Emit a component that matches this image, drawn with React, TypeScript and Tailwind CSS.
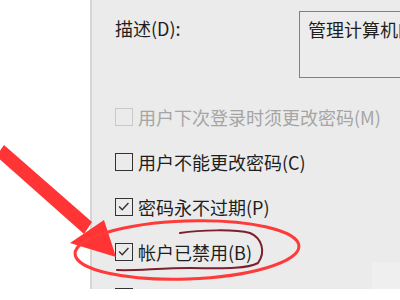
import React from 'react';

const font = { fontFamily: '"Noto Sans CJK SC", "Noto Sans", sans-serif' };

type Row = { label: string; checked?: boolean; disabled?: boolean };

const rows: Row[] = [
  { label: '用户下次登录时须更改密码(M)', disabled: true },
  { label: '用户不能更改密码(C)' },
  { label: '密码永不过期(P)', checked: true },
  { label: '帐户已禁用(B)', checked: true },
  { label: '帐户已锁定(L)' },
];

const CheckBox = ({ checked, disabled }: { checked?: boolean; disabled?: boolean }) => (
  <span
    className={`flex h-[18px] w-[18px] flex-shrink-0 items-center justify-center border-[1.5px] ${
      disabled ? 'border-[#c9c9c9]' : 'border-[#333333]'
    }`}
  >
    {checked && (
      <svg viewBox="0 0 18 18" className="h-[18px] w-[18px]">
        <polyline points="3.5,8.5 7,12 14,4.5" fill="none" stroke="#333" strokeWidth="1.6" />
      </svg>
    )}
  </span>
);

export default function App() {
  return (
    <div className="relative h-[300px] w-[400px] overflow-hidden bg-white" style={font}>
      <div className="flex h-[289px]">
        <div className="w-[90px] bg-white" />
        <div className="flex-1 overflow-hidden border-l-2 border-[#d5d5d5] bg-[#ebebeb] pl-[23px]">
          {/* description */}
          <div className="flex h-[94px] items-start">
            <span className="mt-[16px] w-[184px] flex-shrink-0 text-[18px] leading-[24px] text-[#1e1e1e]">
              描述(D):
            </span>
            <div className="mt-[11px] h-[67px] w-[140px] flex-shrink-0 border border-[#808080] bg-[#ececec] pl-[8px] pt-[5px]">
              <span className="whitespace-nowrap text-[18px] leading-[24px] text-[#1e1e1e]">管理计算机的</span>
            </div>
          </div>

          {/* options */}
          {rows.map((r) => (
            <div key={r.label} className="flex h-[45px] items-center gap-[5px]">
              <CheckBox checked={r.checked} disabled={r.disabled} />
              <span
                className={`whitespace-nowrap text-[18px] leading-[24px] ${
                  r.disabled ? 'text-[#a5a5a5]' : 'text-[#1e1e1e]'
                }`}
              >
                {r.label}
              </span>
            </div>
          ))}
        </div>
      </div>
      <div className="absolute right-0 top-[262px] h-[27px] w-[28px] bg-[#efefef]" />

      {/* annotations */}
      <svg className="absolute left-0 top-0" width="400" height="300" viewBox="0 0 400 300">
        <polygon points="-4,156 4,145 92,222 84,234" fill="#ff3434" />
        <polygon points="70,243 104,220 116,257" fill="#ff3434" />
        <ellipse
          cx="187"
          cy="250"
          rx="112"
          ry="29"
          transform="rotate(-2 187 250)"
          fill="none"
          stroke="#ff3a3a"
          strokeWidth="3"
        />
        <path
          d="M180,233 C200,230 235,229 250,233 C262,238 266,252 258,263 C245,270 215,268 190,268 C160,268 135,271 117,270"
          fill="none"
          stroke="#7d1f2c"
          strokeWidth="2"
          strokeLinecap="round"
        />
      </svg>
    </div>
  );
}
